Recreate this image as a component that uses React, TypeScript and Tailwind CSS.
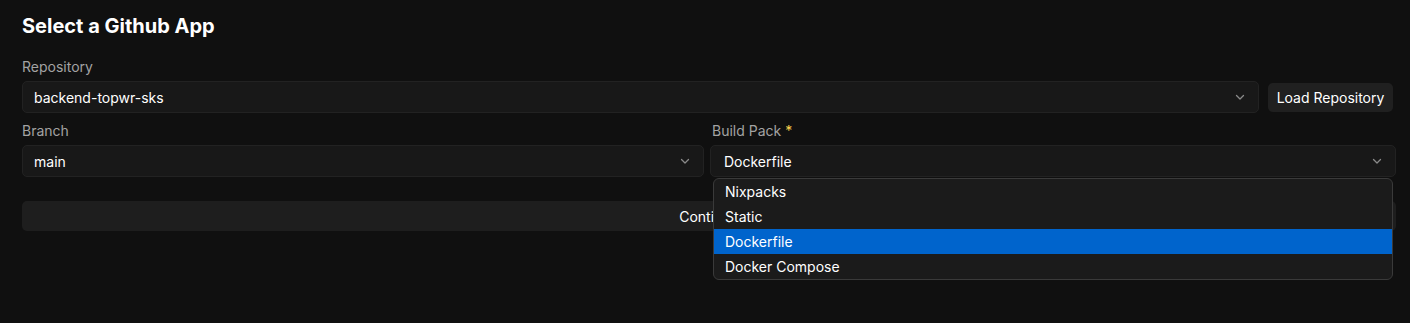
import React from "react";

function Chevron() {
  return (
    <svg width="12" height="12" viewBox="0 0 12 12" fill="none" className="shrink-0">
      <path d="M2.5 4.5L6 8L9.5 4.5" stroke="#8a8a8a" strokeWidth="1.3" strokeLinecap="round" strokeLinejoin="round" />
    </svg>
  );
}

function Select({ value, pl = "pl-[11px]" }: { value: string; pl?: string }) {
  return (
    <div className={"flex h-[32px] w-full items-center justify-between rounded-[5px] border border-[#222222] bg-[#181818] pr-[12px] text-[14px] text-white " + pl}>
      <span>{value}</span>
      <Chevron />
    </div>
  );
}

export default function App() {
  const items = ["Nixpacks", "Static", "Dockerfile", "Docker Compose"];
  return (
    <div
      className="min-h-[323px] w-full bg-[#101010] pl-[22px] pr-[14px] pt-[12px] text-white"
      style={{ fontFamily: "Inter, 'Liberation Sans', sans-serif" }}
    >
      <h2 className="text-[20px] font-bold leading-[28px]">Select a Github App</h2>
      <div className="mt-[17px] flex flex-col">
        <label className="text-[14px] leading-[20px] text-[#a3a3a3]">Repository</label>
        <div className="mt-[4px] flex items-start gap-[9px] pr-[3px]">
          <div className="flex-1">
            <Select value="backend-topwr-sks" />
          </div>
          <button className="mt-[2px] flex h-[29px] w-[125px] items-center justify-center rounded-[5px] bg-[#202020] text-[14px] text-white">
            Load Repository
          </button>
        </div>
      </div>
      <div className="mt-[8px] flex gap-[6px]">
        <div className="flex w-[682px] shrink-0 flex-col">
          <label className="text-[14px] leading-[20px] text-[#a3a3a3]">Branch</label>
          <div className="mt-[4px]">
            <Select value="main" />
          </div>
        </div>
        <div className="flex flex-1 flex-col">
          <label className="pl-[2px] text-[14px] leading-[20px] text-[#a3a3a3]">
            Build Pack <span className="text-[#fcd34d]">*</span>
          </label>
          <div className="relative mt-[4px]">
            <Select value="Dockerfile" pl="pl-[13px]" />
            <div className="absolute left-[3px] right-[3px] top-[33px] z-10 rounded-[6px] border border-[#3a3a3a] bg-[#1b1b1b]">
              {items.map((it) => (
                <div
                  key={it}
                  className={
                    "flex h-[25px] items-center pb-[1px] pl-[11px] text-[14px] text-white " +
                    (it === "Dockerfile" ? "bg-[#0064cc]" : "")
                  }
                >
                  {it}
                </div>
              ))}
            </div>
          </div>
        </div>
      </div>
      <button className="mt-[24px] flex h-[30px] w-full items-center justify-center rounded-[5px] bg-[#1e1e1e] text-[14px] text-white">
        Continue
      </button>
    </div>
  );
}
